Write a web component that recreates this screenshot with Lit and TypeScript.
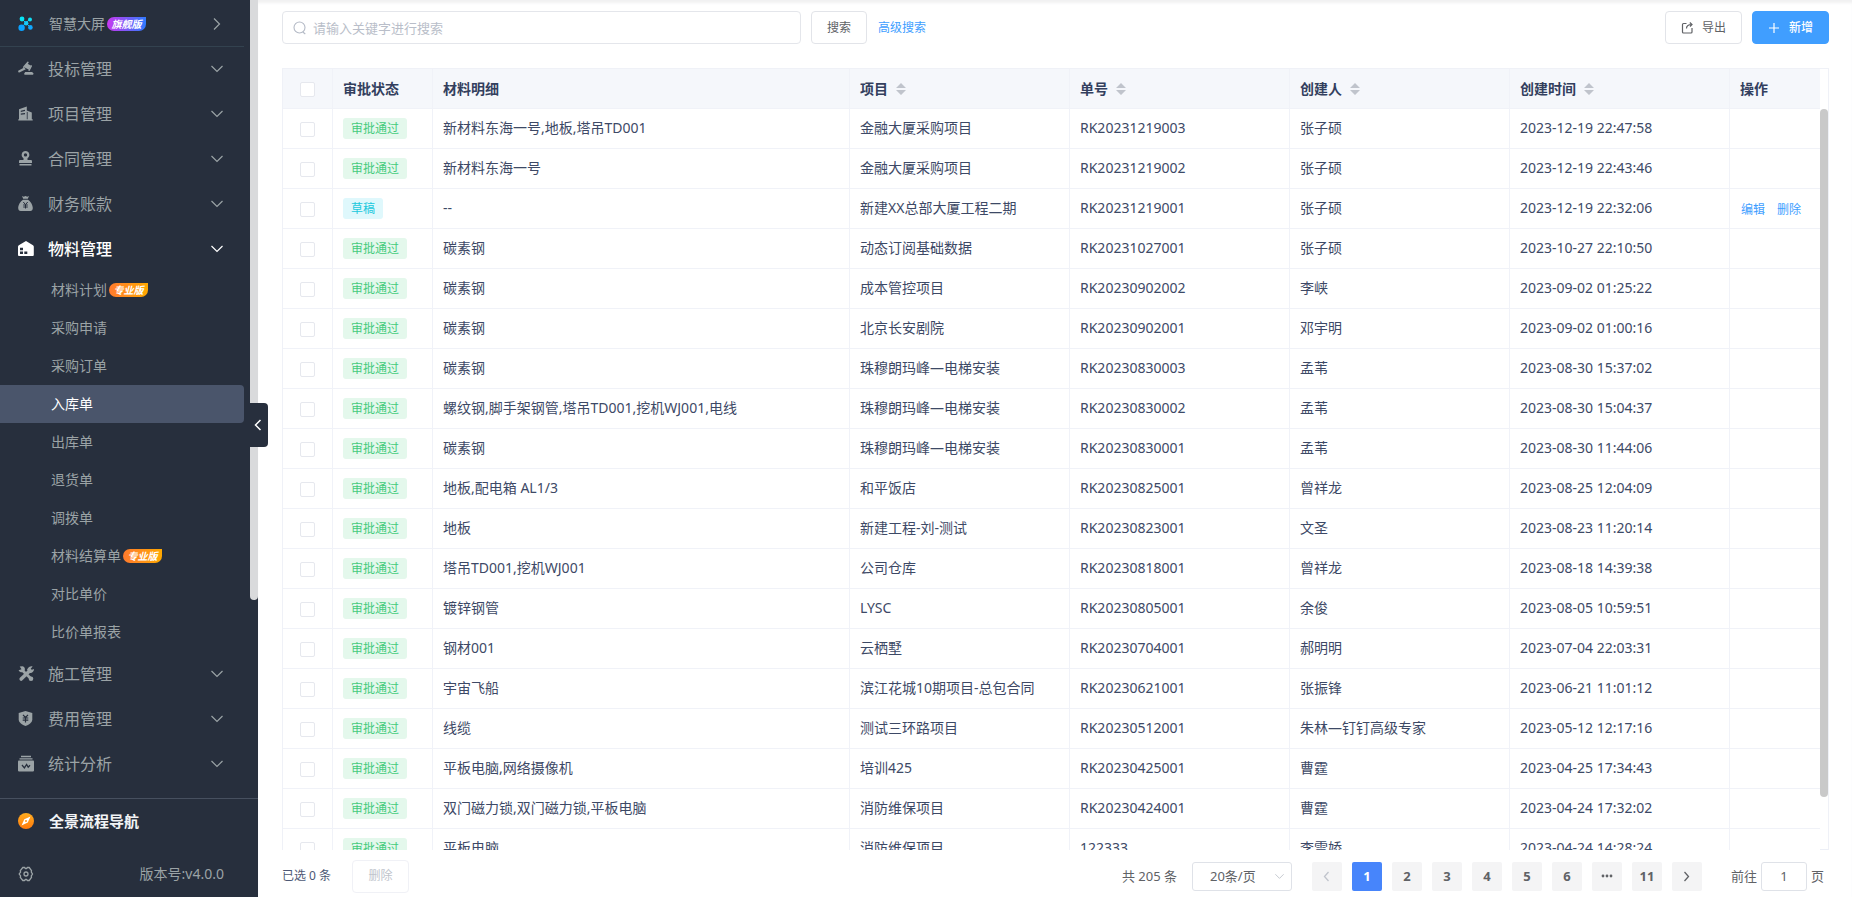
import { LitElement, html, css, svg } from "lit";
import { customElement } from "lit/decorators.js";
import { classMap } from "lit/directives/class-map.js";

type Row = [string, string, string, string, string];

const rows: Row[] = [
  ["新材料东海一号,地板,塔吊TD001", "金融大厦采购项目", "RK20231219003", "张子硕", "2023-12-19 22:47:58"],
  ["新材料东海一号", "金融大厦采购项目", "RK20231219002", "张子硕", "2023-12-19 22:43:46"],
  ["--", "新建XX总部大厦工程二期", "RK20231219001", "张子硕", "2023-12-19 22:32:06"],
  ["碳素钢", "动态订阅基础数据", "RK20231027001", "张子硕", "2023-10-27 22:10:50"],
  ["碳素钢", "成本管控项目", "RK20230902002", "李峡", "2023-09-02 01:25:22"],
  ["碳素钢", "北京长安剧院", "RK20230902001", "邓宇明", "2023-09-02 01:00:16"],
  ["碳素钢", "珠穆朗玛峰—电梯安装", "RK20230830003", "孟苇", "2023-08-30 15:37:02"],
  ["螺纹钢,脚手架钢管,塔吊TD001,挖机WJ001,电线", "珠穆朗玛峰—电梯安装", "RK20230830002", "孟苇", "2023-08-30 15:04:37"],
  ["碳素钢", "珠穆朗玛峰—电梯安装", "RK20230830001", "孟苇", "2023-08-30 11:44:06"],
  ["地板,配电箱 AL1/3", "和平饭店", "RK20230825001", "曾祥龙", "2023-08-25 12:04:09"],
  ["地板", "新建工程-刘-测试", "RK20230823001", "文圣", "2023-08-23 11:20:14"],
  ["塔吊TD001,挖机WJ001", "公司仓库", "RK20230818001", "曾祥龙", "2023-08-18 14:39:38"],
  ["镀锌钢管", "LYSC", "RK20230805001", "余俊", "2023-08-05 10:59:51"],
  ["钢材001", "云栖墅", "RK20230704001", "郝明明", "2023-07-04 22:03:31"],
  ["宇宙飞船", "滨江花城10期项目-总包合同", "RK20230621001", "张振锋", "2023-06-21 11:01:12"],
  ["线缆", "测试三环路项目", "RK20230512001", "朱林—钉钉高级专家", "2023-05-12 12:17:16"],
  ["平板电脑,网络摄像机", "培训425", "RK20230425001", "曹霆", "2023-04-25 17:34:43"],
  ["双门磁力锁,双门磁力锁,平板电脑", "消防维保项目", "RK20230424001", "曹霆", "2023-04-24 17:32:02"],
  ["平板电脑", "消防维保项目", "122333", "李雪娇", "2023-04-24 14:28:24"],
];

const icons = {
  screen: svg`<g><path d="M4 3l8 8M11.5 3.4L3.4 11.4" stroke="#16c0fa" stroke-width="1"/><circle cx="4" cy="3" r="2.400" fill="#08e4f4"/><circle cx="12" cy="3.400" r="2" fill="#10dff5"/><circle cx="8.200" cy="7.200" r="2.200" fill="#16c8fa"/><circle cx="3.600" cy="11.800" r="3.200" fill="#0aa2ff"/><circle cx="12.400" cy="11.400" r="2.300" fill="#10a8ff"/></g>`,
  gavel: svg`<g fill="currentColor"><path d="M8.600 2.200l4.600 2.600-2.200 4-4.800-2.600z"/><path d="M9.600.600l1.200.3-.5 1.300-4.500 4.900-1-.7.600-1.100zM13.200 4.100l.9.900-2.600 5-1.300-.4z"/><path d="M6.200 6.600l1.600 1.700L1.400 11.400.300 11.200.200 9.800z"/><path d="M7.200 11h7l1 1.300v1.500H6.400v-1.500z"/></g>`,
  building: svg`<path fill="currentColor" fill-rule="evenodd" d="M1 3.200L8.800.600V4.600l5 2v6.600h.9v1.300H.300v-1.300H1zM2.800 4.800v1.300l4.200-1V3.800zM2.800 7.400v1.300l4.200-.5V6.900zM8.800 5.800v7.400h.8V6z"/>`,
  stamp: svg`<g fill="currentColor"><path fill-rule="evenodd" d="M7.500 0a3.900 3.900 0 0 0-2 7.200V9H2.200C1.300 9 1 9.600 1 10.400V12h13v-1.600c0-.8-.3-1.400-1.200-1.400H9.500V7.200A3.900 3.900 0 0 0 7.500 0zm0 2.200a1.700 1.700 0 1 1 0 3.400 1.700 1.700 0 0 1 0-3.400z"/><path d="M1.500 13h12v1.500h-12z"/></g>`,
  bag: svg`<path fill="currentColor" d="M4 0l1.800.7L7.500 0l1.700.7L11 0 9.800 2.800H5.200z"/><path fill="currentColor" d="M5 3.700h5c2.500 1.600 4.800 5.300 4.800 8.300 0 2-1 3-2.500 3H2.700c-1.500 0-2.500-1-2.500-3C.2 9 2.500 5.300 5 3.700z"/><path d="M5.300 6l2.200 2.600L9.700 6M7.500 8.500v4M5.200 9h4.600M5.200 11h4.600" stroke="#272f3d" fill="none"/>`,
  house: svg`<path fill="currentColor" fill-rule="evenodd" d="M8 0l7 4.300c.6.400.8.800.8 1.400v8c0 .8-.5 1.300-1.200 1.300H1.300C.5 15 0 14.500 0 13.700V5.700c0-.6.2-1 .8-1.400zM2 6.800v2.400h3V6.800zM2 10.600V13h3v-2.400zM6.300 10.600V13h3v-2.400z"/>`,
  tools: svg`<path d="M4 4l8.800 8.600" stroke="currentColor" stroke-width="2.800"/><path d="M11.500 5l-8.300 8" stroke="currentColor" stroke-width="3.600" stroke-linecap="round"/><path d="M1.700.6l1.800 2.600L.6 4.300C1.800 6.700 4.700 6.900 6.200 5.300S6.800.7 4.500.3zM9 3.700C10.300.8 13-.3 14.600.5L12.700 2.700l1.100 1.100 2.200-.7c.2 2.500-2.200 4.500-4.400 3.900z" fill="currentColor"/><circle cx="13" cy="12.800" r="2.300" fill="currentColor"/>`,
  shield: svg`<path fill="currentColor" d="M7.500 0l6.800 2v6.500c0 3-3.500 5.500-6.800 6.500C4.200 14 .7 11.500.7 8.500V2z"/><path d="M5 3.800l2.500 2.700L10 3.800M7.500 6.500v5M4.700 7h5.600M4.700 9.200h5.600" stroke="#272f3d" fill="none" stroke-width="1.200"/>`,
  stats: svg`<path d="M3 .5h10M1.500 2.900h13" stroke="currentColor" stroke-width="1.400"/><path fill="currentColor" d="M.8 4.600h14.400c.5 0 .8.300.8.800v9.200c0 .5-.3.800-.8.800H.8c-.5 0-.8-.3-.8-.8V5.400c0-.5.3-.8.8-.8z"/><path d="M4 9l2.400 2.800L8.600 8.400l1.600 2.800L12 9.200" stroke="#272f3d" stroke-width="1.300" fill="none"/>`,
};

const icon = (body: unknown) => html`<svg class="icon" viewBox="0 0 16 16" aria-hidden="true">${body}</svg>`;
const chev = html`<svg class="chev" viewBox="0 0 12 8" aria-hidden="true"><path d="M.5 1l5.500 5.500L11.500 1" fill="none" stroke="currentColor" stroke-width="1.200"/></svg>`;

@customElement("app-root")
export class AppRoot extends LitElement {
  static styles = css`
    :host { display: flex; height: 100vh; overflow: hidden; background: #fff; color: #3d4966;
      font: 14px/20px "Noto Sans", "Noto Sans CJK SC", sans-serif; }
    * { box-sizing: border-box; }
    button, input, select { font: inherit; color: inherit; }
    button { cursor: pointer; }
    a { text-decoration: none; color: inherit; }
    ul { list-style: none; margin: 0; padding: 0; }

    .side { position: relative; flex: none; width: 258px; display: flex; flex-direction: column;
      background: #272f3d; color: #9ba3a6; }
    .scroll { flex: 1; min-height: 0; overflow: hidden; display: flex; }
    .menu { flex: 1; padding-right: 6px; }
    .thumb { width: 8px; height: 600px; background: #d9dadc; border-radius: 0 0 4px 4px; }
    .item { width: 100%; height: 45px; display: flex; align-items: center; gap: 14px; padding: 0 20px 0 18px;
      border: 0; background: none; font-size: 16px; text-align: left; }
    .label { flex: 1; display: flex; align-items: center; gap: 2px; }
    .screen { height: 46px; padding-top: 2px; font-size: 14px; gap: 15px; }
    .ruled { border-top: 1px solid #33424f; }
    .open { color: #fff; font-weight: 500; }
    .icon { width: 16px; height: 16px; flex: none; overflow: visible; }
    .chev { width: 12px; height: 8px; flex: none; margin-right: 1px; }
    .right { transform: rotate(-90deg); }
    .sub { height: 38px; display: flex; align-items: center; gap: 2px; padding-left: 51px; border-radius: 0 4px 4px 0; }
    .active { background: #4a556b; color: #fff; }
    .badge { width: 39px; height: 14px; border-radius: 8px 0 8px 8px; font: italic bold 10px/14px "Noto Sans CJK SC", sans-serif;
      color: #fff; text-align: center; background: linear-gradient(90deg, #ff7a2e, #ffa800); }
    .flag { background: linear-gradient(90deg, #c937f0, #2f7bff); }
    .bottom { border-top: 1px solid #47505f; }
    .guide { height: 43px; font-size: 15px; font-weight: bold; color: #f2f4f6; display: flex; align-items: center; gap: 15px; padding-left: 18px; }
    .version { height: 55px; padding: 8px 34px 0 18px; display: flex; align-items: center; justify-content: space-between; }
    .fold { position: absolute; left: 250px; top: 403px; width: 18px; height: 44px; padding: 0 2px 0 0; border: 0; border-radius: 0 4px 4px 0;
      background: #272f3d; color: #fff; display: grid; place-items: center; z-index: 1; }
    .fold svg { width: 8px; height: 12px; }

    .main { flex: 1; min-width: 0; display: flex; flex-direction: column; padding: 0 23px 0 24px; box-shadow: inset 0 4px 3px -1px #f1f1f2; }
    .bar { display: flex; align-items: center; padding-top: 11px; }
    .field { width: 519px; height: 33px; display: flex; align-items: center; gap: 6px; padding: 0 10px; border: 1px solid #e4e6eb; border-radius: 4px; }
    .field svg { width: 14px; height: 14px; }
    .field input { flex: 1; min-width: 0; border: 0; outline: 0; padding: 0; font-size: 13px; background: none; }
    .field input::placeholder { color: #b9bec9; opacity: 1; }
    .btn { height: 33px; padding: 0 15px; border: 1px solid #e2e4e9; border-radius: 4px; background: #fff; color: #606266;
      font-size: 12px; line-height: 16px; display: flex; align-items: center; justify-content: center; gap: 9px; }
    .btn svg { width: 12px; height: 12px; }
    .search { margin: 0 11px 0 10px; }
    .link { color: #409eff; font-size: 12px; }
    .spread { flex: 1; }
    .wide { width: 77px; }
    .primary { background: #409eff; border-color: #409eff; color: #fff; margin-left: 10px; font-weight: 500; }

    .table { flex: 1; min-height: 0; margin-top: 24px; display: flex; overflow: hidden; border: 1px solid #eff1f7; border-width: 1px 1px 0 1px; }
    .clip { flex: 1; min-width: 0; overflow: hidden auto; scrollbar-width: none; }
    .track { width: 8px; padding-top: 40px; border-bottom: 1px solid #eceff6; }
    .track div { height: 688px; border-radius: 4px; background: #c9c9c9; }
    table { width: 100%; border-collapse: separate; border-spacing: 0; table-layout: fixed; }
    th, td { height: 40px; padding: 0 10px; text-align: left; border-right: 1px solid #f0f2f8; border-bottom: 1px solid #f0f2f8;
      white-space: nowrap; overflow: hidden; }
    th { position: sticky; top: 0; background: #f5f7fb; color: #333f5e; font-weight: bold; z-index: 1; }
    .txt { padding-bottom: 2px; }
    .c0 { width: 50px; } .c1 { width: 100px; } .c3 { width: 220px; } .c7 { width: 90px; }
    th:first-child, td:first-child { text-align: center; padding: 0; }
    th:last-child, td:last-child { border-right: 0; }
    .box { appearance: none; display: block; width: 15px; height: 15px; margin: 2px auto 0; border: 1px solid #e6e8ee; border-radius: 2px; background: #fff; }
    .head { display: flex; align-items: center; gap: 8px; }
    .head svg { width: 10px; height: 12px; }
    .tag { display: block; width: fit-content; height: 21px; padding: 0 8px; border-radius: 3px; background: #e4f8ec; color: #45cb7c; font-size: 12px; line-height: 21px; }
    .draft { background: #dff8fc; color: #20c8dc; }
    .acts { display: flex; gap: 12px; font-size: 12px; color: #409eff; padding: 2px 0 0 1px; }

    .foot { height: 47px; display: flex; align-items: center; font-size: 13px; color: #606266; padding: 5px 5px 0 0; }
    .picked { font-size: 12px; color: #4d5875; }
    .del { margin-left: 21px; color: #c0c4cc; border-color: #f0f1f6; width: 57px; }
    .size { position: relative; margin: 0 20px 0 15px; color: #606266; }
    .size select { appearance: none; width: 100px; height: 29px; padding: 0 0 0 17px; border: 1px solid #dfe2e8; border-radius: 3px; background: none; display: block; }
    .size svg { position: absolute; right: 8px; top: 11px; width: 9px; height: 7px; color: #c0c4cc; }
    .pages { display: flex; gap: 10px; }
    .pages button { width: 30px; height: 29px; padding: 0; border: 0; border-radius: 2px; background: #f4f4f5; font-weight: bold; display: grid; place-items: center; }
    .pages .now { background: #4785fb; color: #fff; }
    .pages svg { width: 7px; height: 11px; }
    .pages .dots { width: 12px; height: 4px; }
    .pages .off { color: #c0c4cc; }
    .goto { display: flex; align-items: center; gap: 4px; margin-left: 29px; }
    .goto input { width: 46px; height: 29px; border: 1px solid #dfe2e8; border-radius: 3px; text-align: center; padding: 0; }
  `;

  private group(name: string, body: unknown, open = false, ruled = false) {
    return html`<button class=${classMap({ item: true, open, ruled })} aria-expanded=${open}>${icon(body)}<span class="label">${name}</span>${chev}</button>`;
  }

  private sub(name: string, pro = false) {
    return html`<li><a class=${classMap({ sub: true, active: name === "入库单" })} href="#">${name}${pro ? html`<span class="badge">专业版</span>` : ""}</a></li>`;
  }

  private th(name: string) {
    return html`<th class="c3"><span class="head">${name}<svg viewBox="0 0 10 12"><path d="M5 0l5 5H0zM0 7h10l-5 5z" fill="#c0c4cc"/></svg></span></th>`;
  }

  private arrow(d: string) {
    return html`<svg viewBox="0 0 7 11"><path d=${d} fill="none" stroke="currentColor" stroke-width="1.3"/></svg>`;
  }

  private dots() {
    return html`<svg class="dots" viewBox="0 0 12 4" fill="currentColor"><circle cx="2" cy="2" r="1.4"/><circle cx="6" cy="2" r="1.4"/><circle cx="10" cy="2" r="1.4"/></svg>`;
  }

  render() {
    return html`
      <nav class="side">
        <div class="scroll">
          <div class="menu">
            <button class="item screen">${icon(icons.screen)}<span class="label">智慧大屏<span class="badge flag">旗舰版</span></span>
              <svg class="chev right" viewBox="0 0 12 8"><path d="M.5 1l5.500 5.500L11.500 1" fill="none" stroke="currentColor" stroke-width="1.200"/></svg></button>
            ${this.group("投标管理", icons.gavel, false, true)}
            ${this.group("项目管理", icons.building)}
            ${this.group("合同管理", icons.stamp)}
            ${this.group("财务账款", icons.bag)}
            ${this.group("物料管理", icons.house, true)}
            <ul>
              ${this.sub("材料计划", true)}${this.sub("采购申请")}${this.sub("采购订单")}${this.sub("入库单")}${this.sub("出库单")}
              ${this.sub("退货单")}${this.sub("调拨单")}${this.sub("材料结算单", true)}${this.sub("对比单价")}${this.sub("比价单报表")}
            </ul>
            ${this.group("施工管理", icons.tools)}
            ${this.group("费用管理", icons.shield)}
            ${this.group("统计分析", icons.stats)}
          </div>
          <div class="thumb"></div>
        </div>
        <div class="bottom">
          <a class="guide" href="#"><svg class="icon" viewBox="0 0 16 16"><defs><linearGradient id="or" x1="0" y1="0" x2="0" y2="1"><stop offset="0" stop-color="#ffad1f"/><stop offset="1" stop-color="#ff7a0d"/></linearGradient></defs><circle cx="8" cy="8" r="8" fill="url(#or)"/><path fill-rule="evenodd" fill="#fff" d="M12.500 3.500L9.800 9.500 3.500 12.500l2.800-6.200zM8 7a1 1 0 1 0 0 2 1 1 0 0 0 0-2z"/></svg>全景流程导航</a>
          <div class="version"><svg class="icon" viewBox="0 0 16 16" fill="none" stroke="currentColor" stroke-width="1.300"><path d="M4.800 1.500h1.700l1 1h1l1-1h1.700l2.300 3.200L13.300 6 14.500 8l-1.200 2 .2 1.300-2.300 3.200H9.500l-1-1h-1l-1 1H4.800L2.300 11.300 2.600 10 1.200 8l1.400-2-.3-1.300z"/><circle cx="8" cy="8" r="2"/></svg><span>版本号:v4.0.0</span></div>
        </div>
        <button class="fold" aria-label="收起菜单"><svg viewBox="0 0 8 12"><path d="M6.500 1L1.500 6l5 5" fill="none" stroke="currentColor" stroke-width="1.500"/></svg></button>
      </nav>
      <main class="main">
        <div class="bar">
          <label class="field"><svg viewBox="0 0 14 14" fill="none" stroke="#b4bac6" stroke-width="1.100"><circle cx="6.500" cy="6.500" r="5.500"/><path d="M9.800 11l2.500 2"/></svg><input placeholder="请输入关键字进行搜索" aria-label="搜索关键字" /></label>
          <button class="btn search">搜索</button>
          <a class="link" href="#">高级搜索</a>
          <span class="spread"></span>
          <button class="btn wide"><svg viewBox="0 0 12 12" fill="none" stroke="currentColor" stroke-width="1.200"><path d="M5.500 1.500H2.500c-.6 0-1 .4-1 1v7.500c0 .6.400 1 1 1H10c.6 0 1-.4 1-1V6"/><path d="M5.500 6.500C5.500 4 7.500 2.500 10.500 2.500M8.800.5l2.200 2-2 2"/></svg>导出</button>
          <button class="btn wide primary"><svg viewBox="0 0 12 12"><path d="M6 1v10M1 6h10" stroke="currentColor" stroke-width="1.200"/></svg>新增</button>
        </div>
        <div class="table">
          <div class="clip">
            <table>
              <thead><tr><th class="c0"><input class="box" type="checkbox" aria-label="全选" /></th><th class="c1">审批状态</th><th>材料明细</th>
                ${this.th("项目")}${this.th("单号")}${this.th("创建人")}${this.th("创建时间")}<th class="c7">操作</th></tr></thead>
              <tbody>
                ${rows.map((r, i) => html`<tr>
                  <td><input class="box" type="checkbox" aria-label=${"选择 " + r[2]} /></td>
                  <td><span class=${classMap({ tag: true, draft: i === 2 })}>${i === 2 ? "草稿" : "审批通过"}</span></td>
                  ${r.map((c) => html`<td class="txt">${c}</td>`)}
                  <td>${i === 2 ? html`<span class="acts"><a href="#">编辑</a><a href="#">删除</a></span>` : ""}</td>
                </tr>`)}
              </tbody>
            </table>
          </div>
          <div class="track"><div></div></div>
        </div>
        <div class="foot">
          <span class="picked">已选 0 条</span>
          <button class="btn del" disabled>删除</button>
          <span class="spread"></span>
          <span>共 205 条</span>
          <label class="size"><select aria-label="每页条数"><option>20条/页</option></select><svg viewBox="0 0 12 8"><path d="M.5 1l5.500 5.500L11.500 1" fill="none" stroke="currentColor" stroke-width="1.200"/></svg></label>
          <div class="pages">
            <button class="off" aria-label="上一页">${this.arrow("M5.500 1L1.500 5.500l4 4.500")}</button>
            ${["1", "2", "3", "4", "5", "6"].map((p) => html`<button class=${classMap({ now: p === "1" })}>${p}</button>`)}
            <button aria-label="更多页">${this.dots()}</button>
            <button>11</button>
            <button aria-label="下一页">${this.arrow("M1.500 1l4 4.500-4 4.500")}</button>
          </div>
          <label class="goto">前往<input value="1" />页</label>
        </div>
      </main>
    `;
  }
}
